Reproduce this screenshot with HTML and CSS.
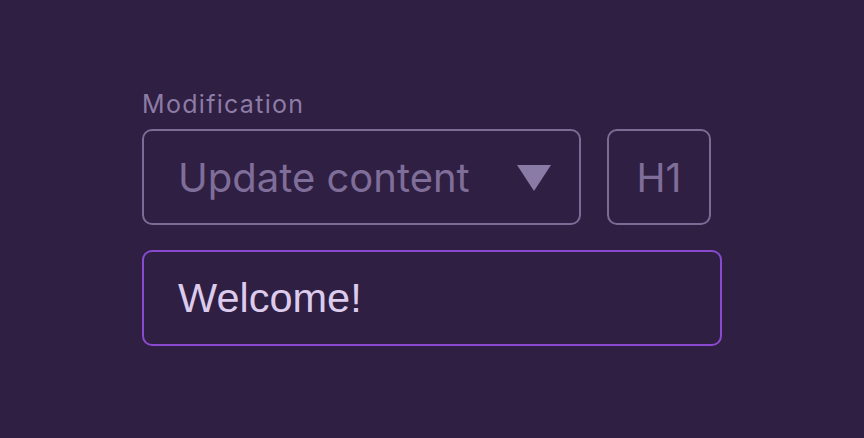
FILE: index.html
```html
<!DOCTYPE html>
<html lang="en">
<head>
    <meta charset="UTF-8">
    <meta name="viewport" content="width=device-width, initial-scale=1.0">
    <title>Modification</title>
    <link rel="stylesheet" href="styles.css">
</head>
<body>
    <div class="editor">
        <label class="field-label" for="modSelect">Modification</label>
        <div class="control-row">
            <div class="select-box" id="modSelect">
                <span class="select-text">Update content</span>
                <span class="select-arrow"></span>
            </div>
            <div class="tag-box">H1</div>
        </div>
        <div class="text-input">Welcome!</div>
    </div>
</body>
</html>
```

FILE: styles.css
```css
html, body {
    margin: 0;
    height: 100%;
    background: #2f1f42;
}

.editor {
    display: flex;
    flex-direction: column;
    width: 580px;
    padding: 90px 0 0 142px;
    font-family: "Inter", "Noto Sans", sans-serif;
}

.field-label {
    color: #8d7ca6;
    font-size: 25px;
    line-height: 29px;
    letter-spacing: 1.3px;
    margin-bottom: 10px;
}

.control-row {
    display: flex;
    gap: 26px; /* space between select and tag */
}

.select-box {
    box-sizing: border-box;
    width: 439px;
    height: 96px;
    border: 2px solid #7c6b94;
    border-radius: 10px;
    display: flex;
    align-items: center;
    justify-content: space-between;
    padding: 0 28px 0 34px;
}

.select-text {
    color: #7f6e99;
    font-size: 40px;
}

.select-arrow {
    width: 0;
    height: 0;
    border-left: 17px solid transparent;
    border-right: 17px solid transparent;
    border-top: 26px solid #8a7aa6;
    margin-top: 2px;
}

.tag-box {
    box-sizing: border-box;
    width: 104px;
    height: 96px;
    border: 2px solid #7c6b94;
    border-radius: 10px;
    display: flex;
    align-items: center;
    justify-content: center;
    color: #7f6e99;
    font-size: 39px;
}

.text-input {
    box-sizing: border-box;
    margin-top: 25px;
    width: 580px;
    height: 96px;
    border: 2px solid #8a4ad0;
    border-radius: 10px;
    display: flex;
    align-items: center;
    padding-left: 34px;
    color: #dccbec;
    font-family: "Liberation Sans", Arial, sans-serif;
    font-size: 41.5px;
}
```
